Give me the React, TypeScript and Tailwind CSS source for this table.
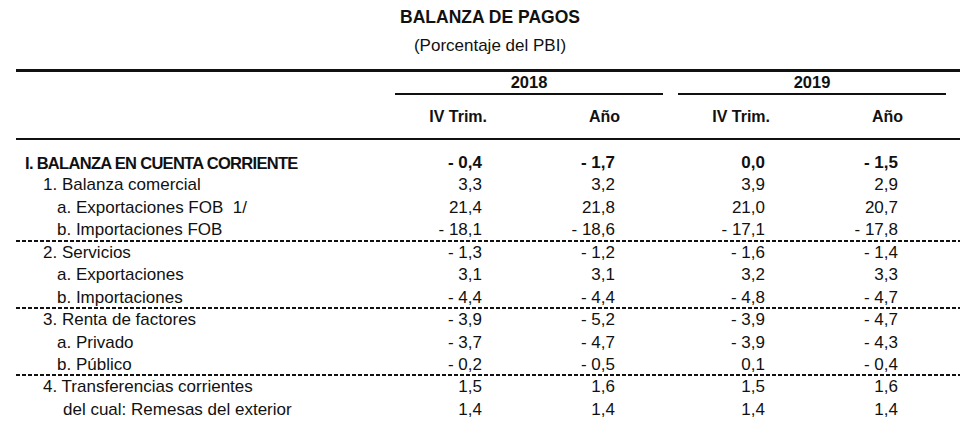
import React from "react";

type Row = {
  label: string;
  indent: string;
  bold?: boolean;
  vals: string[];
  dashed?: boolean;
};

const rows: Row[] = [
  { label: "I. BALANZA EN CUENTA CORRIENTE", indent: "pl-[9px]", bold: true, vals: ["- 0,4", "- 1,7", "0,0", "- 1,5"] },
  { label: "1. Balanza comercial", indent: "pl-[27px]", vals: ["3,3", "3,2", "3,9", "2,9"] },
  { label: "a. Exportaciones FOB  1/", indent: "pl-[41px]", vals: ["21,4", "21,8", "21,0", "20,7"] },
  { label: "b. Importaciones FOB", indent: "pl-[41px]", vals: ["- 18,1", "- 18,6", "- 17,1", "- 17,8"], dashed: true },
  { label: "2. Servicios", indent: "pl-[27px]", vals: ["- 1,3", "- 1,2", "- 1,6", "- 1,4"] },
  { label: "a. Exportaciones", indent: "pl-[41px]", vals: ["3,1", "3,1", "3,2", "3,3"] },
  { label: "b. Importaciones", indent: "pl-[41px]", vals: ["- 4,4", "- 4,4", "- 4,8", "- 4,7"], dashed: true },
  { label: "3. Renta de factores", indent: "pl-[27px]", vals: ["- 3,9", "- 5,2", "- 3,9", "- 4,7"] },
  { label: "a. Privado", indent: "pl-[41px]", vals: ["- 3,7", "- 4,7", "- 3,9", "- 4,3"] },
  { label: "b. Público", indent: "pl-[41px]", vals: ["- 0,2", "- 0,5", "0,1", "- 0,4"], dashed: true },
  { label: "4. Transferencias corrientes", indent: "pl-[27px]", vals: ["1,5", "1,6", "1,5", "1,6"] },
  { label: "del cual: Remesas del exterior", indent: "pl-[47px]", vals: ["1,4", "1,4", "1,4", "1,4"] },
];

export default function App() {
  return (
    <div className="w-[980px] h-[426px] bg-white text-[#111] overflow-hidden" style={{ fontFamily: '"Liberation Sans", Arial, sans-serif' }}>
      <div className="pt-[6px] text-center">
        <div className="text-[17.5px] leading-[22px] font-bold">BALANZA DE PAGOS</div>
        <div className="mt-[7px] text-[17px] leading-[22px]">(Porcentaje del PBI)</div>
      </div>

      <div className="ml-[16px] w-[944px] mt-[12px]">
        <div className="h-[3px] bg-[#111]" />

        <div className="grid grid-cols-[379px_268px_15px_268px_14px] text-[16.5px] font-bold leading-[21px]">
          <div />
          <div className="text-center border-b-2 border-[#111]">2018</div>
          <div />
          <div className="text-center border-b-2 border-[#111]">2019</div>
          <div />
        </div>

        <div className="grid grid-cols-[389px_82px_133px_150px_133px_57px] text-[16px] font-bold leading-[22px] pt-[11px] pb-[10px]">
          <div />
          <div className="text-right">IV Trim.</div>
          <div className="text-right">Año</div>
          <div className="text-right">IV Trim.</div>
          <div className="text-right">Año</div>
          <div />
        </div>

        <div className="h-[2px] bg-[#111]" />

        <div className="pt-[12px]">
          {rows.map((r, i) => (
            <div
              key={i}
              className={
                "grid grid-cols-[384px_82px_133px_150px_133px_62px] h-[22.45px] leading-[22.45px] whitespace-pre text-[17px] " +
                (r.bold ? "font-bold " : "") +
                (r.dashed
                  ? "bg-[image:repeating-linear-gradient(90deg,#111_0px,#111_4px,transparent_4px,transparent_6px)] bg-[length:100%_2px] bg-bottom bg-no-repeat"
                  : "")
              }
            >
              <div className={r.indent + (r.bold ? " text-[16.5px] tracking-[-0.7px]" : "")}>{r.label}</div>
              {r.vals.map((v, j) => (
                <div key={j} className="text-right">
                  {v}
                </div>
              ))}
              <div />
            </div>
          ))}
        </div>
      </div>
    </div>
  );
}
